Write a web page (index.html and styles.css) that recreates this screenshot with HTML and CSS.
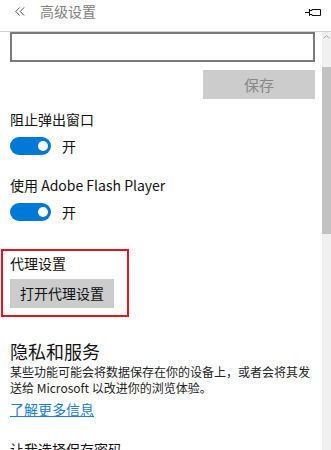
FILE: index.html
```html
<!DOCTYPE html>
<html lang="zh-CN">
<head>
<meta charset="utf-8">
<link rel="stylesheet" href="styles.css">
</head>
<body>
<div class="page">
  <header class="header">
    <svg class="back" width="10" height="9" viewBox="0 0 10 9"><path d="M4.5 0.5 L0.8 4.5 L4.5 8.5 M9 0.5 L5.3 4.5 L9 8.5" fill="none" stroke="#555" stroke-width="1"/></svg>
    <span class="title">高级设置</span>
    <svg class="pin" width="16" height="9" viewBox="0 0 16 9"><path d="M0 4.5 H4.5 M4.5 1 V8 M5 2.5 H7 V1.5 H15.5 V7.5 H7 V6.5 H5" fill="none" stroke="#111" stroke-width="1"/></svg>
  </header>
  <div class="main">
    <div class="content">
      <div class="input"></div>
      <div class="save-row"><div class="btn save">保存</div></div>
      <div class="label first">阻止弹出窗口</div>
      <div class="toggle-row"><div class="toggle"><span class="knob"></span></div><span class="on">开</span></div>
      <div class="label second">使用 Adobe Flash Player</div>
      <div class="toggle-row"><div class="toggle"><span class="knob"></span></div><span class="on">开</span></div>
      <div class="proxy">
        <div class="label">代理设置</div>
        <div class="btn open">打开代理设置</div>
      </div>
      <h2 class="heading">隐私和服务</h2>
      <p class="desc">某些功能可能会将数据保存在你的设备上，或者会将其发送给 Microsoft 以改进你的浏览体验。</p>
      <a class="link">了解更多信息</a>
      <div class="label last">让我选择保存密码</div>
    </div>
    <div class="scrollbar">
      <svg class="up" width="7" height="4" viewBox="0 0 7 4"><path d="M0.5 3.5 L3.5 0.5 L6.5 3.5" fill="none" stroke="#aaa" stroke-width="1"/></svg>
      <div class="thumb"></div>
    </div>
  </div>
</div>
</body>
</html>
```

FILE: styles.css
```css
* { box-sizing: border-box; }
html, body { margin: 0; padding: 0; background: #fff; }
body {
  font-family: "Noto Sans CJK SC", "Noto Sans", sans-serif;
  color: #111;
  width: 331px;
  height: 450px;
  overflow: hidden;
}
.page { width: 331px; height: 450px; display: flex; flex-direction: column; }
.header {
  height: 32px;
  flex: none;
  border-bottom: 1px solid #cfcfcf;
  display: flex;
  align-items: flex-start;
  padding-top: 1px;
}
.back { margin: 6px 0 0 15px; }
.title {
  margin-left: 15px;
  font-size: 14px;
  line-height: 20px;
  color: #808080;
}
.pin { margin: 7px 10px 0 auto; }
.main { flex: 1; display: flex; min-height: 0; }
.content { width: 322px; padding-left: 10px; flex: none; }
.input {
  width: 305px;
  height: 30px;
  border: 2px solid #7a7a7a;
  background: #fff;
}
.save-row { display: flex; justify-content: flex-end; width: 305px; margin-top: 8px; }
.btn {
  background: #cccccc;
  font-size: 14px;
  line-height: 29px;
  height: 29px;
  text-align: center;
}
.save { width: 112px; color: #888; font-size: 15px; }
.label { font-size: 14px; line-height: 20px; }
.label.first { margin-top: 10px; }
.label.second { margin-top: 19px; }
.toggle-row { display: flex; align-items: center; height: 20px; margin-top: 7px; }
.toggle {
  width: 41px;
  height: 18px;
  border-radius: 9px;
  background: #0078d7;
  display: flex;
  align-items: center;
  justify-content: flex-end;
  padding-right: 3px;
}
.knob { width: 10px; height: 10px; border-radius: 50%; background: #fff; }
.on { margin-left: 11px; font-size: 14px; line-height: 20px; }
.proxy {
  margin-top: 27px;
  margin-left: -9px;
  width: 128px;
  border: 2px solid #e8121c;
  padding: 2px 0 7px 7px;
}
.open { display: inline-block; margin-top: 6px; padding: 0 10px; }
.heading {
  margin: 22px 0 0;
  font-size: 18px;
  line-height: 24px;
  font-weight: normal;
}
.desc {
  margin: 1px 0 0;
  width: 305px;
  font-size: 12px;
  line-height: 16px;
  color: #222;
}
.link {
  display: inline-block;
  font-size: 14px;
  line-height: 20px;
  color: #1a80dc;
  text-decoration: underline;
}
.label.last { margin-top: 19px; }
.scrollbar {
  width: 9px;
  flex: none;
  background: #f0f0f0;
  display: flex;
  flex-direction: column;
  align-items: center;
}
.up { margin-top: 3px; }
.thumb { width: 9px; height: 167px; background: #c2c2c2; margin-top: 28px; }
```
